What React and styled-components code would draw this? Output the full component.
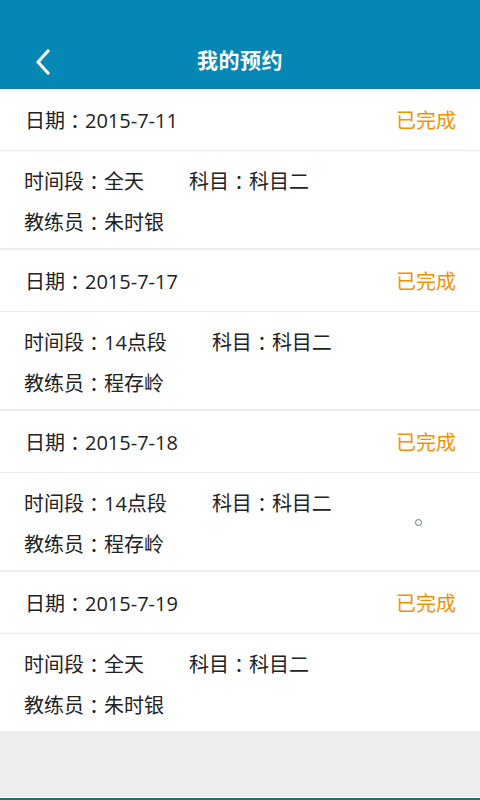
import styled, { createGlobalStyle } from 'styled-components';

const GlobalStyle = createGlobalStyle`
    html, body {
        margin: 0;
        padding: 0;
        background: #eeeeee;
    }
    body {
        font-family: "Open Sans", "Noto Sans CJK SC", "Noto Sans", sans-serif;
        -webkit-font-smoothing: antialiased;
    }
`;

const Page = styled.div`
    position: relative;
    display: flex;
    flex-direction: column;
    min-height: 800px;
    background: #eeeeee;
`;
const TopBar = styled.header`
    position: relative;
    height: 88px;
    display: flex;
    align-items: center;
    justify-content: center;
    background: #0487b4;
    border-bottom: 1px solid #0a7ca4;
`;
const BackButton = styled.button`
    position: absolute;
    left: 29px;
    top: 47px;
    width: 28px;
    height: 30px;
    padding: 0;
    border: none;
    background: none;
    display: flex;
    align-items: center;
    justify-content: center;
`;
const Title = styled.h1`
    margin: 30px 0 0;
    color: #ffffff;
    font-family: "Noto Sans CJK SC", sans-serif;
    font-size: 21px;
    font-weight: 700;
    letter-spacing: 0.5px;
`;
const List = styled.main`
    flex: 1;
`;
const Card = styled.section`
    background: #ffffff;
    margin-bottom: 2px;
`;
const CardHead = styled.div`
    height: 61px;
    display: flex;
    align-items: center;
    justify-content: space-between;
    padding: 0 24px 0 25px;
    border-bottom: 1px solid #eeeeee;
    font-size: 20px;
    color: #222222;
`;
const Status = styled.span`
    color: #f39200;
    font-size: 20px;
`;
const CardBody = styled.div`
    padding: 9px 24px 6px;
`;
const Line = styled.div`
    display: flex;
    height: 41px;
    align-items: center;
    font-size: 20px;
    color: #222222;
`;
const Field = styled.span`
    & + & {
        margin-left: 45px;
    }
`;
/* 全角冒号：半宽字形，放在一个字宽里居中 */
const Colon = styled.span`
    display: inline-block;
    width: 1em;
    text-align: center;
    font-family: "Noto Sans CJK SC", sans-serif;
    font-feature-settings: "halt" 1;
    text-spacing-trim: space-all;
`;
const BottomStrip = styled.footer`
    height: 2px;
    border-top: 1px solid #ffffff;
    background: #177a68;
`;
const TouchDot = styled.span`
    position: absolute;
    left: 415px;
    top: 519px;
    width: 5px;
    height: 5px;
    border: 1.5px solid #5c7c8a;
    border-radius: 50%;
`;

const yuyue = [
    { date: '2015-7-11', period: '全天', coach: '朱时银' },
    { date: '2015-7-17', period: '14点段', coach: '程存岭' },
    { date: '2015-7-18', period: '14点段', coach: '程存岭' },
    { date: '2015-7-19', period: '全天', coach: '朱时银' },
];

function App() {
    return (
        <>
            <GlobalStyle />
            <Page>
                <TopBar>
                    <BackButton aria-label="返回">
                        <svg width="16" height="26" viewBox="0 0 16 26">
                            <path
                                d="M13 2 L3 13 L13 24"
                                fill="none"
                                stroke="#ffffff"
                                strokeWidth="3.2"
                                strokeLinecap="round"
                                strokeLinejoin="round"
                            />
                        </svg>
                    </BackButton>
                    <Title>我的预约</Title>
                </TopBar>
                <List>
                    {yuyue.map((item, index) => (
                        <Card key={index}>
                            <CardHead>
                                <span>
                                    日期<Colon>：</Colon>
                                    {item.date}
                                </span>
                                <Status>已完成</Status>
                            </CardHead>
                            <CardBody>
                                <Line>
                                    <Field>
                                        时间段<Colon>：</Colon>
                                        {item.period}
                                    </Field>
                                    <Field>
                                        科目<Colon>：</Colon>科目二
                                    </Field>
                                </Line>
                                <Line>
                                    <Field>
                                        教练员<Colon>：</Colon>
                                        {item.coach}
                                    </Field>
                                </Line>
                            </CardBody>
                        </Card>
                    ))}
                </List>
                <BottomStrip />
                <TouchDot />
            </Page>
        </>
    );
}

export default App;
